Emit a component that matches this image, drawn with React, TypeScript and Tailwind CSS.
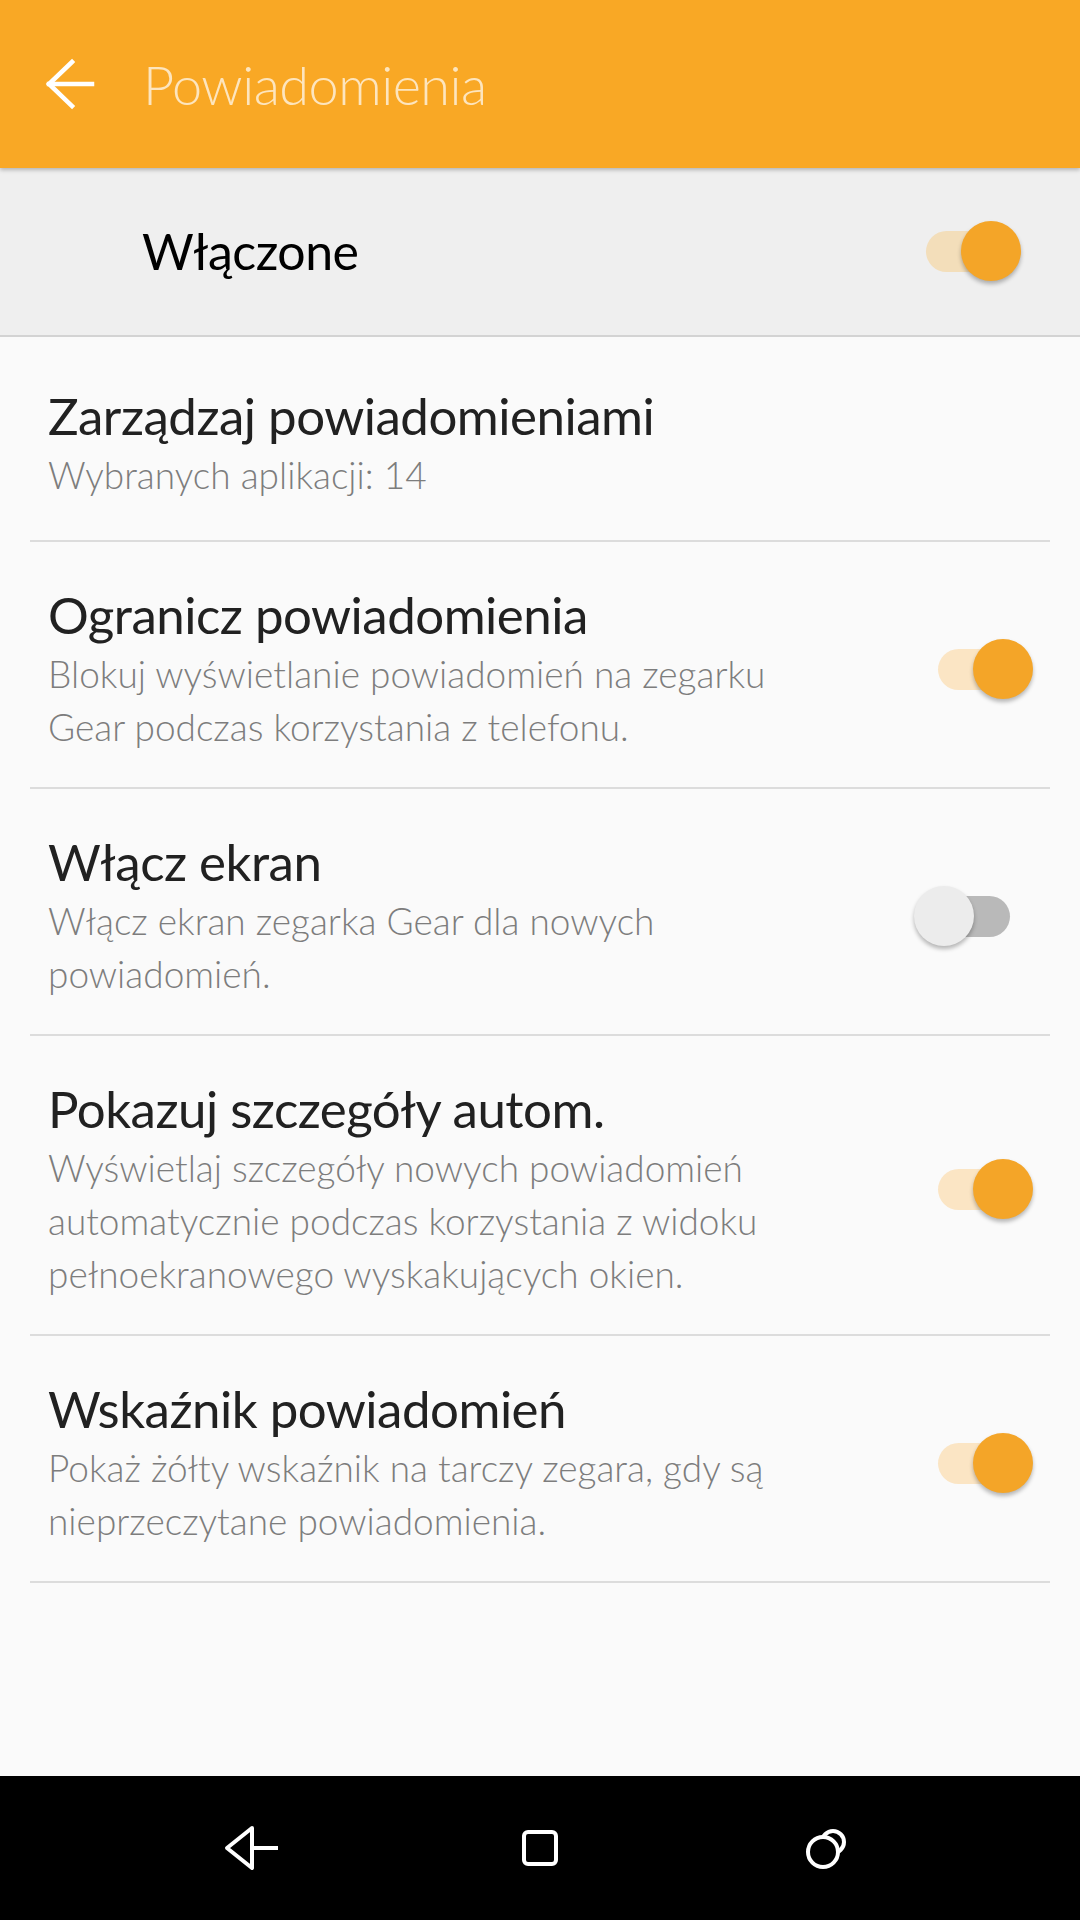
import React from "react";

type Row = {
  title: string;
  lines: string[];
  toggle?: boolean;
  first?: boolean;
};

const rows: Row[] = [
  { title: "Zarządzaj powiadomieniami", lines: ["Wybranych aplikacji: 14"], first: true },
  {
    title: "Ogranicz powiadomienia",
    lines: ["Blokuj wyświetlanie powiadomień na zegarku", "Gear podczas korzystania z telefonu."],
    toggle: true,
  },
  {
    title: "Włącz ekran",
    lines: ["Włącz ekran zegarka Gear dla nowych", "powiadomień."],
    toggle: false,
  },
  {
    title: "Pokazuj szczegóły autom.",
    lines: [
      "Wyświetlaj szczegóły nowych powiadomień",
      "automatycznie podczas korzystania z widoku",
      "pełnoekranowego wyskakujących okien.",
    ],
    toggle: true,
  },
  {
    title: "Wskaźnik powiadomień",
    lines: ["Pokaż żółty wskaźnik na tarczy zegara, gdy są", "nieprzeczytane powiadomienia."],
    toggle: true,
  },
];

function Toggle({ on, onGray }: { on: boolean; onGray?: boolean }) {
  const track = on ? (onGray ? "bg-[#f3deba]" : "bg-[#fbe5c4]") : "bg-[#b9b9b9]";
  return (
    <div className={`relative h-[41px] w-[72px] shrink-0 rounded-full ${track}`}>
      <div
        className={`absolute top-[-10px] h-[60px] w-[60px] rounded-full shadow-[0_3px_4px_rgba(0,0,0,0.28)] ${
          on ? "left-[35px] bg-[#f4a528]" : "left-[-24px] bg-[#ececec]"
        }`}
      />
    </div>
  );
}

function BackArrow() {
  return (
    <svg width="50" height="52" viewBox="0 0 50 52" fill="none" stroke="#fff" strokeWidth="4.5" strokeLinecap="square">
      <path d="M4 26H47" />
      <path d="M27 4L4 26L27 48" />
    </svg>
  );
}

function NavBack() {
  return (
    <svg width="58" height="46" viewBox="0 0 58 46" fill="none" stroke="#fff" strokeWidth="4" strokeLinejoin="round">
      <path d="M29 3L4 23L29 43Z" />
      <path d="M29 23H55" />
    </svg>
  );
}

function NavHome() {
  return (
    <svg width="38" height="38" viewBox="0 0 38 38" fill="none" stroke="#fff" strokeWidth="4">
      <rect x="3" y="3" width="32" height="32" rx="4" />
    </svg>
  );
}

function NavRecents() {
  return (
    <svg width="48" height="48" viewBox="0 0 48 48" fill="none" stroke="#fff" strokeWidth="4">
      <circle cx="29" cy="18" r="11" />
      <circle cx="19" cy="28" r="15" fill="#000" />
    </svg>
  );
}

export default function App() {
  return (
    <div className="flex h-[1920px] w-[1080px] flex-col bg-[#fafafa] font-['Lato',sans-serif]">
      <header className="relative z-10 flex h-[168px] shrink-0 items-center bg-[#f9a825] shadow-[0_2px_4px_rgba(0,0,0,0.25)]">
        <div className="ml-[45px] flex items-center">
          <BackArrow />
        </div>
        <h1 className="ml-[48px] text-[54px] font-light tracking-[-0.5px] text-white/70">Powiadomienia</h1>
      </header>

      <div className="flex h-[169px] shrink-0 items-center justify-between border-b-2 border-[#d3d3d3] bg-[#efefef] pl-[142px] pr-[82px]">
        <span className="text-[50px] tracking-[-0.5px] text-black">Włączone</span>
        <Toggle on onGray />
      </div>

      <div className="flex-1 px-[30px]">
        {rows.map((row) => (
          <div
            key={row.title}
            className={`flex items-center justify-between border-b-2 border-[#dcdcdc] pl-[18px] pr-[40px] ${
              row.first ? "pt-[49px] pb-[39px]" : "pt-[43px] pb-[34px]"
            }`}
          >
            <div className="flex flex-col">
              <div className="text-[51px] leading-[60px] tracking-[-0.5px] text-[#212121]">{row.title}</div>
              <div className="mt-[2px] text-[37px] font-light leading-[53px] text-[#7d7d7d]">
                {row.lines.map((l) => (
                  <div key={l}>{l}</div>
                ))}
              </div>
            </div>
            {row.toggle !== undefined && <Toggle on={row.toggle} />}
          </div>
        ))}
      </div>

      <nav className="flex h-[144px] shrink-0 items-center justify-center bg-black">
        <div className="flex w-[288px] justify-center">
          <NavBack />
        </div>
        <div className="flex w-[288px] justify-center">
          <NavHome />
        </div>
        <div className="flex w-[288px] justify-center">
          <NavRecents />
        </div>
      </nav>
    </div>
  );
}
